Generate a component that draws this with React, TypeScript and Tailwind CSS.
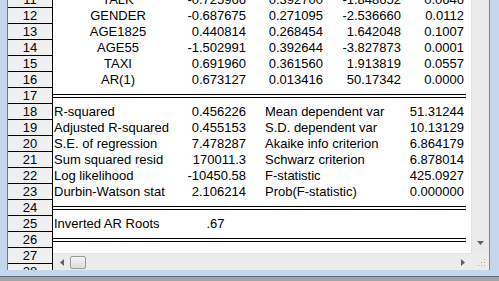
import React from "react";

const coefRows = [
  { n: 11, name: "TALK", v: ["-0.725966", "0.392700", "-1.848652", "0.0646"] },
  { n: 12, name: "GENDER", v: ["-0.687675", "0.271095", "-2.536660", "0.0112"] },
  { n: 13, name: "AGE1825", v: ["0.440814", "0.268454", "1.642048", "0.1007"] },
  { n: 14, name: "AGE55", v: ["-1.502991", "0.392644", "-3.827873", "0.0001"] },
  { n: 15, name: "TAXI", v: ["0.691960", "0.361560", "1.913819", "0.0557"] },
  { n: 16, name: "AR(1)", v: ["0.673127", "0.013416", "50.17342", "0.0000"] },
];

const statRows = [
  ["R-squared", "0.456226", "Mean dependent var", "51.31244"],
  ["Adjusted R-squared", "0.455153", "S.D. dependent var", "10.13129"],
  ["S.E. of regression", "7.478287", "Akaike info criterion", "6.864179"],
  ["Sum squared resid", "170011.3", "Schwarz criterion", "6.878014"],
  ["Log likelihood", "-10450.58", "F-statistic", "425.0927"],
  ["Durbin-Watson stat", "2.106214", "Prob(F-statistic)", "0.000000"],
];

function DoubleLine() {
  return (
    <div className="h-4 w-[413px] flex flex-col pt-[6px]">
      <div className="h-px bg-black" />
      <div className="h-[2px]" />
      <div className="h-px bg-black" />
    </div>
  );
}

export default function App() {
  const headerNums = Array.from({ length: 18 }, (_, i) => 11 + i);
  return (
    <div
      className="w-[499px] h-[281px] overflow-hidden flex flex-col bg-[#c4d7ec] text-[13px] leading-4 text-black"
      style={{ fontFamily: '"Liberation Sans", Arial, sans-serif' }}
    >
      <div className="flex h-[270px]">
        {/* left frame */}
        <div className="w-[7px] bg-[#c4d7ec]" />
        {/* row header */}
        <div className="w-[46px] h-[270px] overflow-hidden border-l border-[#6e7a86] border-r border-r-black bg-[#f0f0f0]">
          <div className="-mt-2 flex flex-col">
            {headerNums.map((n) => (
              <div key={n} className="h-4 box-border border-b border-black text-center">
                {n}
              </div>
            ))}
          </div>
        </div>
        {/* main */}
        <div className="flex-1 flex flex-col">
          <div className="flex h-[253px]">
            <div className="flex-1 bg-white overflow-hidden">
              <div className="-mt-2 flex flex-col">
                {coefRows.map((r) => (
                  <div key={r.n} className="h-4 grid grid-cols-[130px_65px_77px_78px_63px] whitespace-nowrap">
                    <div className="text-center">{r.name}</div>
                    {r.v.map((x, i) => (
                      <div key={i} className="text-right pr-[2px]">{x}</div>
                    ))}
                  </div>
                ))}
                <DoubleLine />
                {statRows.map((r, i) => (
                  <div key={i} className="h-4 grid grid-cols-[130px_65px_155px_63px] whitespace-nowrap">
                    <div className="pl-px">{r[0]}</div>
                    <div className="text-right pr-[2px]">{r[1]}</div>
                    <div className="pl-[17px]">{r[2]}</div>
                    <div className="text-right pr-[2px]">{r[3]}</div>
                  </div>
                ))}
                <DoubleLine />
                <div className="h-4 grid grid-cols-[130px_65px] whitespace-nowrap">
                  <div className="pl-px">Inverted AR Roots</div>
                  <div className="text-center">.67</div>
                </div>
                <DoubleLine />
                <div className="h-4" />
              </div>
            </div>
            {/* vertical scrollbar */}
            <div className="w-[18px] bg-[#eaeaea] border-l border-[#e2e2e2] flex flex-col justify-end items-center pb-[8px]">
              <svg width="7" height="4" viewBox="0 0 7 4">
                <polygon points="0,0 7,0 3.5,4" fill="#606060" />
              </svg>
            </div>
          </div>
          <div className="flex h-[17px]">
            {/* horizontal scrollbar */}
            <div className="flex-1 bg-[#ececec] border-t border-[#e4e4e4] flex items-center">
              <div className="w-[17px] flex items-center justify-center">
                <svg width="4" height="7" viewBox="0 0 4 7">
                  <polygon points="4,0 4,7 0,3.5" fill="#606060" />
                </svg>
              </div>
              <div className="w-[16px] h-[13px] rounded-[2px] border border-[#9a9a9a] bg-gradient-to-b from-[#f4f4f4] to-[#dcdcdc]" />
              <div className="flex-1" />
              <div className="w-[17px] flex items-center justify-center">
                <svg width="4" height="7" viewBox="0 0 4 7">
                  <polygon points="0,0 0,7 4,3.5" fill="#606060" />
                </svg>
              </div>
            </div>
            {/* corner grip */}
            <div className="w-[18px] bg-[#ececec] flex items-end justify-end p-[3px]">
              <svg width="8" height="8" viewBox="0 0 8 8">
                <rect x="6" y="0" width="1" height="1" fill="#b0b0b0" />
                <rect x="3" y="3" width="1" height="1" fill="#b0b0b0" />
                <rect x="6" y="3" width="1" height="1" fill="#b0b0b0" />
                <rect x="0" y="6" width="1" height="1" fill="#b0b0b0" />
                <rect x="3" y="6" width="1" height="1" fill="#b0b0b0" />
                <rect x="6" y="6" width="1" height="1" fill="#b0b0b0" />
              </svg>
            </div>
          </div>
        </div>
        {/* right frame */}
        <div className="w-px bg-[#7d8a96]" />
        <div className="w-[9px] bg-[#c4d7ec]" />
      </div>
      <div className="h-[6px] bg-[#c4d7ec]" />
      <div className="h-px bg-[#4d6a78]" />
      <div className="flex-1 bg-[#a4a4a4]" />
    </div>
  );
}
